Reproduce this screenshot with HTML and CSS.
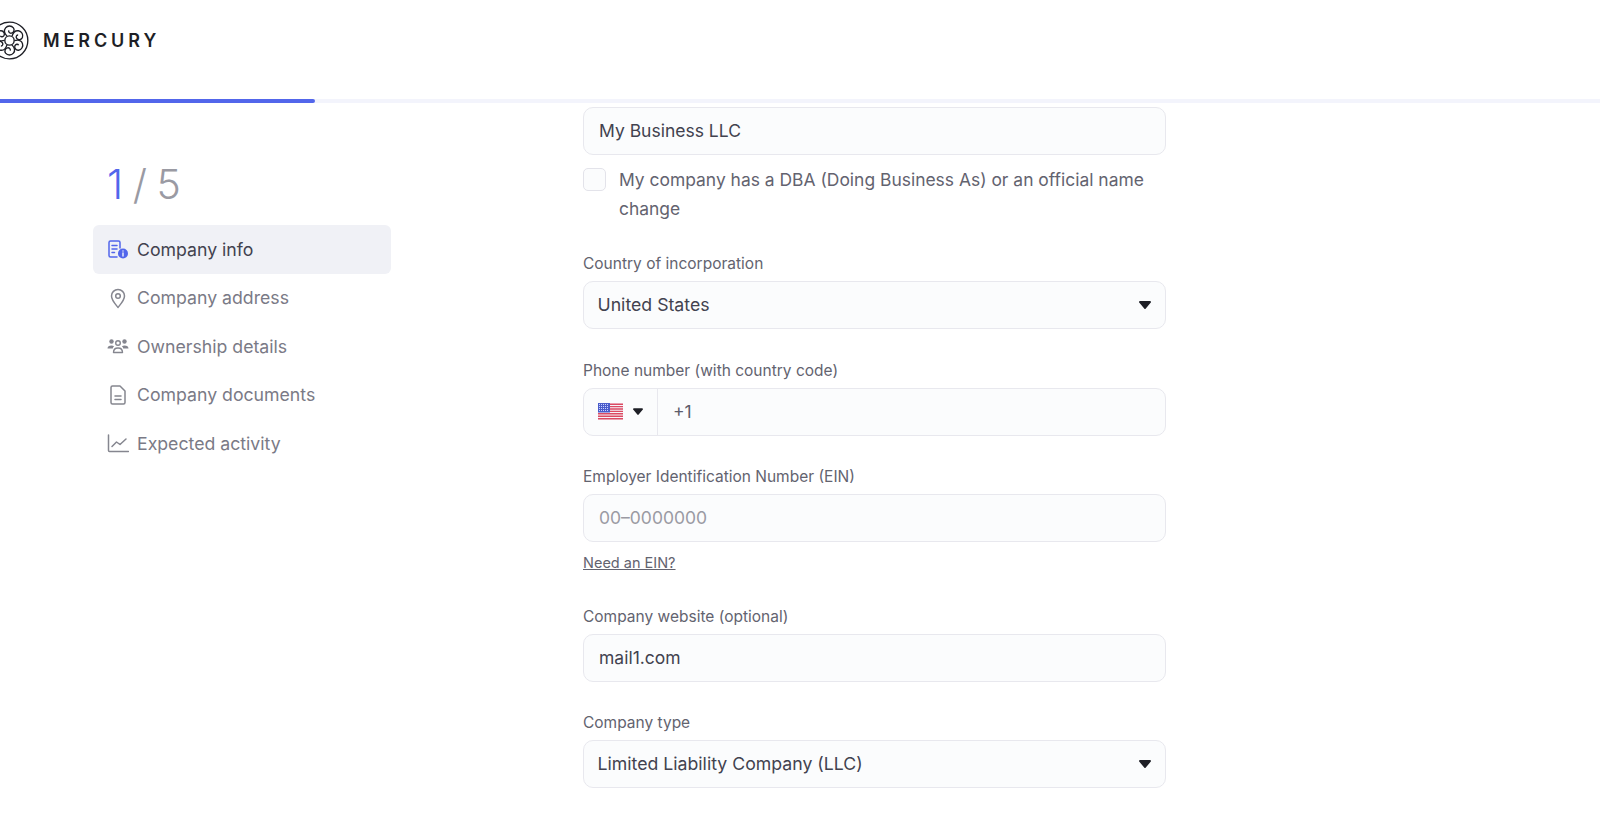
FILE: index.html
```html
<!DOCTYPE html>
<html lang="en">
<head>
  <meta charset="UTF-8">
  <meta name="viewport" content="width=device-width, initial-scale=1.0">
  <title>Mercury - Company info</title>
  <link rel="stylesheet" href="styles.css">
</head>
<body>
  <header class="topbar">
    <svg class="logo-mark" viewBox="0 0 40 40" fill="none" stroke="#1e1f26" stroke-width="1.400">
      <defs>
        <path id="curl" d="M17.500 15.500c-2.500-2.500-3.500-6-1.500-8.500 2-2.500 6-2.500 8 0 1.500 2 .5 5-2 5.500-2 .3-3.500-1.500-2.500-3"/>
      </defs>
      <circle cx="20" cy="20" r="18.800"/>
      <circle cx="20" cy="20" r="4.800"/>
      <use href="#curl"/>
      <use href="#curl" transform="rotate(60 20 20)"/>
      <use href="#curl" transform="rotate(120 20 20)"/>
      <use href="#curl" transform="rotate(180 20 20)"/>
      <use href="#curl" transform="rotate(240 20 20)"/>
      <use href="#curl" transform="rotate(300 20 20)"/>
    </svg>
    <span class="logo-text">MERCURY</span>
  </header>
  <div class="progress"><div class="progress-fill"></div></div>

  <div class="layout">
    <aside class="sidebar">
      <div class="step-count"><span class="step-now">1</span> / 5</div>
      <nav class="steps">
        <a class="step step-active">
          <svg class="step-icon" viewBox="0 0 22 22" fill="none" stroke="#5266eb" stroke-width="1.500" stroke-linecap="round" stroke-linejoin="round">
            <path d="M10 19H3.500A1.500 1.500 0 0 1 2 17.500v-13A1.500 1.500 0 0 1 3.500 3h8A1.500 1.500 0 0 1 13 4.500V10"/>
            <path d="M5 7.500h5M5 11h5M5 14.500h2.500"/>
            <circle cx="16" cy="15.500" r="5" fill="#5266eb" stroke="none"/>
            <path d="M16 15v3M16 12.900v.2" stroke="#fff" stroke-width="1.300"/>
          </svg>
          Company info
        </a>
        <a class="step">
          <svg class="step-icon" viewBox="0 0 22 22" fill="none" stroke="#85868f" stroke-width="1.500">
            <path d="M11 20.500c-1-1.500-6.500-7-6.500-11.500a6.500 6.500 0 0 1 13 0c0 4.500-5.500 10-6.500 11.500z" stroke-linejoin="round"/>
            <circle cx="11" cy="9" r="2.300"/>
          </svg>
          Company address
        </a>
        <a class="step">
          <svg class="step-icon" viewBox="0 0 22 22" fill="#85868f">
            <circle cx="4.500" cy="6.500" r="2.200"/>
            <circle cx="17.500" cy="6.500" r="2.200"/>
            <circle cx="11" cy="8" r="2.300" fill="none" stroke="#85868f" stroke-width="1.400"/>
            <path d="M.5 13.500c0-2 1.500-3 4-3 1 0 2 .2 2.600.7-.8.700-1.200 1.400-1.300 2.300zM21.500 13.500c0-2-1.500-3-4-3-1 0-2 .2-2.600.7.800.7 1.200 1.400 1.300 2.300z"/>
            <path d="M6.500 17.500c0-2.800 2-4.500 4.500-4.500s4.500 1.700 4.500 4.500z" fill="none" stroke="#85868f" stroke-width="1.400" stroke-linejoin="round"/>
          </svg>
          Ownership details
        </a>
        <a class="step">
          <svg class="step-icon" viewBox="0 0 22 22" fill="none" stroke="#85868f" stroke-width="1.500" stroke-linejoin="round" stroke-linecap="round">
            <path d="M6 2h7l5 5v11.500a1.500 1.500 0 0 1-1.500 1.500h-11A1.500 1.500 0 0 1 4 18.500v-15A1.500 1.500 0 0 1 5.500 2z"/>
            <path d="M8 12h6M8 15.500h6"/>
          </svg>
          Company documents
        </a>
        <a class="step">
          <svg class="step-icon" viewBox="0 0 22 22" fill="none" stroke="#85868f" stroke-width="1.500" stroke-linejoin="round" stroke-linecap="round">
            <path d="M1.500 3v15.500a1 1 0 0 0 1 1h19"/>
            <path d="M5 14.500l4.500-4.500 3.500 2.500 6-5.500"/>
          </svg>
          Expected activity
        </a>
      </nav>
    </aside>

    <main class="form">
      <input class="field" type="text" value="My Business LLC">
      <label class="check">
        <span class="check-box"></span>
        <span>My company has a DBA (Doing Business As) or an official name change</span>
      </label>

      <div class="group">
        <div class="label">Country of incorporation</div>
        <div class="select">United States
          <svg class="caret" viewBox="0 0 12 8"><path d="M1 0h10a1 1 0 0 1 .8 1.600L6.800 7.600a1 1 0 0 1-1.600 0L.2 1.600A1 1 0 0 1 1 0z"/></svg>
        </div>
      </div>

      <div class="group">
        <div class="label">Phone number (with country code)</div>
        <div class="phone">
          <div class="flag-picker">
            <svg class="flag" viewBox="0 0 25 17">
              <rect width="25" height="17" fill="#f6f4f8"/>
              <path d="M0 1.200h25M0 3.600h25M0 6h25M0 8.400h25M0 10.800h25M0 13.200h25M0 15.800h25" stroke="#dc4a63" stroke-width="1.400"/>
              <rect width="12" height="9.500" fill="#4a5ccb"/>
              <path d="M1 1.500h10M1 3.500h10M1 5.500h10M1 7.500h10" stroke="#c9d2ff" stroke-width="1" stroke-dasharray="1 1"/>
            </svg>
            <svg class="caret caret-small" viewBox="0 0 12 8"><path d="M1 0h10a1 1 0 0 1 .8 1.600L6.800 7.600a1 1 0 0 1-1.600 0L.2 1.600A1 1 0 0 1 1 0z"/></svg>
          </div>
          <div class="phone-code">+1</div>
        </div>
      </div>

      <div class="group">
        <div class="label">Employer Identification Number (EIN)</div>
        <input class="field" type="text" placeholder="00–0000000">
        <a class="help-link">Need an EIN?</a>
      </div>

      <div class="group">
        <div class="label">Company website (optional)</div>
        <input class="field" type="text" value="mail1.com">
      </div>

      <div class="group">
        <div class="label">Company type</div>
        <div class="select">Limited Liability Company (LLC)
          <svg class="caret" viewBox="0 0 12 8"><path d="M1 0h10a1 1 0 0 1 .8 1.600L6.800 7.600a1 1 0 0 1-1.600 0L.2 1.600A1 1 0 0 1 1 0z"/></svg>
        </div>
      </div>
    </main>
  </div>
</body>
</html>
```

FILE: styles.css
```css
* {
  box-sizing: border-box;
}
html, body {
  height: 100%;
}
body {
  margin: 0;
  background-color: #fff;
  color: #42424f;
  font-family: Inter, "Liberation Sans", sans-serif;
  overflow: hidden;
}
.topbar {
  height: 99px;
  padding-bottom: 19px;
  display: flex;
  align-items: center;
  margin-left: -10px;
}
.logo-mark {
  width: 39px;
  height: 39px;
  margin-right: 14px;
}
.logo-text {
  font-size: 18px;
  font-weight: 600;
  letter-spacing: 3.900px;
  color: #1e1f26;
}
.progress {
  height: 4px;
  background-color: #f3f4fc;
}
.progress-fill {
  width: 315px;
  height: 100%;
  background-color: #5266eb;
  border-radius: 0 2px 2px 0;
}
.layout {
  display: flex;
  padding-left: 93px;
}
.sidebar {
  width: 298px;
  margin-right: 192px;
  padding-top: 56px;
}
.step-count {
  font-size: 41px;
  line-height: 50px;
  font-weight: 300;
  letter-spacing: -1px;
  color: #9a9aa3;
  padding-left: 14px;
  margin-bottom: 16px;
}
.step-now {
  color: #5266eb;
}
.step {
  display: flex;
  align-items: center;
  height: 48.500px;
  padding-left: 14px;
  border-radius: 6px;
  font-size: 17.700px;
  color: #7a7a86;
}
.step-active {
  background-color: #f0f1f6;
  color: #42424f;
}
.step-icon {
  width: 22px;
  height: 22px;
  margin-right: 8px;
}
.form {
  width: 583px;
  padding-top: 4px;
}
.field, .select, .phone {
  display: block;
  width: 100%;
  height: 48px;
  background-color: #fbfcfd;
  border: 1px solid #e8e8ee;
  border-radius: 10px;
  font-family: inherit;
  font-size: 17.500px;
  color: #42424f;
}
.field {
  padding: 0 15px 1px;
  outline: none;
}
.field::placeholder {
  color: #9a9aa3;
  opacity: 1;
}
.select {
  display: flex;
  align-items: center;
  justify-content: space-between;
  padding: 0 14px 1px 13.500px;
  font-size: 17.700px;
}
.caret {
  width: 12px;
  height: 8px;
  fill: #1e1f26;
}
.caret-small {
  width: 10px;
  height: 7px;
}
.check {
  display: flex;
  gap: 13px;
  margin-top: 9.500px;
  font-size: 17.450px;
  line-height: 29px;
  color: #63636f;
}
.check-box {
  flex: none;
  width: 23px;
  height: 23px;
  margin-top: 3px;
  background-color: #fbfcfd;
  border: 1px solid #e3e3ea;
  border-radius: 5px;
}
.group {
  margin-top: 29.500px;
}
.label {
  font-size: 15.500px;
  line-height: 24px;
  margin-bottom: 5px;
  color: #63636f;
}
.phone {
  display: flex;
  align-items: stretch;
}
.flag-picker {
  display: flex;
  align-items: center;
  gap: 10px;
  width: 74px;
  padding-left: 14px;
  padding-bottom: 1px;
  border-right: 1px solid #e8e8ee;
}
.flag {
  width: 25px;
  height: 17px;
}
.phone-code {
  display: flex;
  align-items: center;
  padding: 0 0 1px 15px;
  color: #5d5d6b;
}
.help-link {
  display: block;
  margin-top: 10px;
  padding-bottom: 1px;
  font-size: 14.500px;
  line-height: 22px;
  color: #63636f;
  text-decoration: underline;
}
```
